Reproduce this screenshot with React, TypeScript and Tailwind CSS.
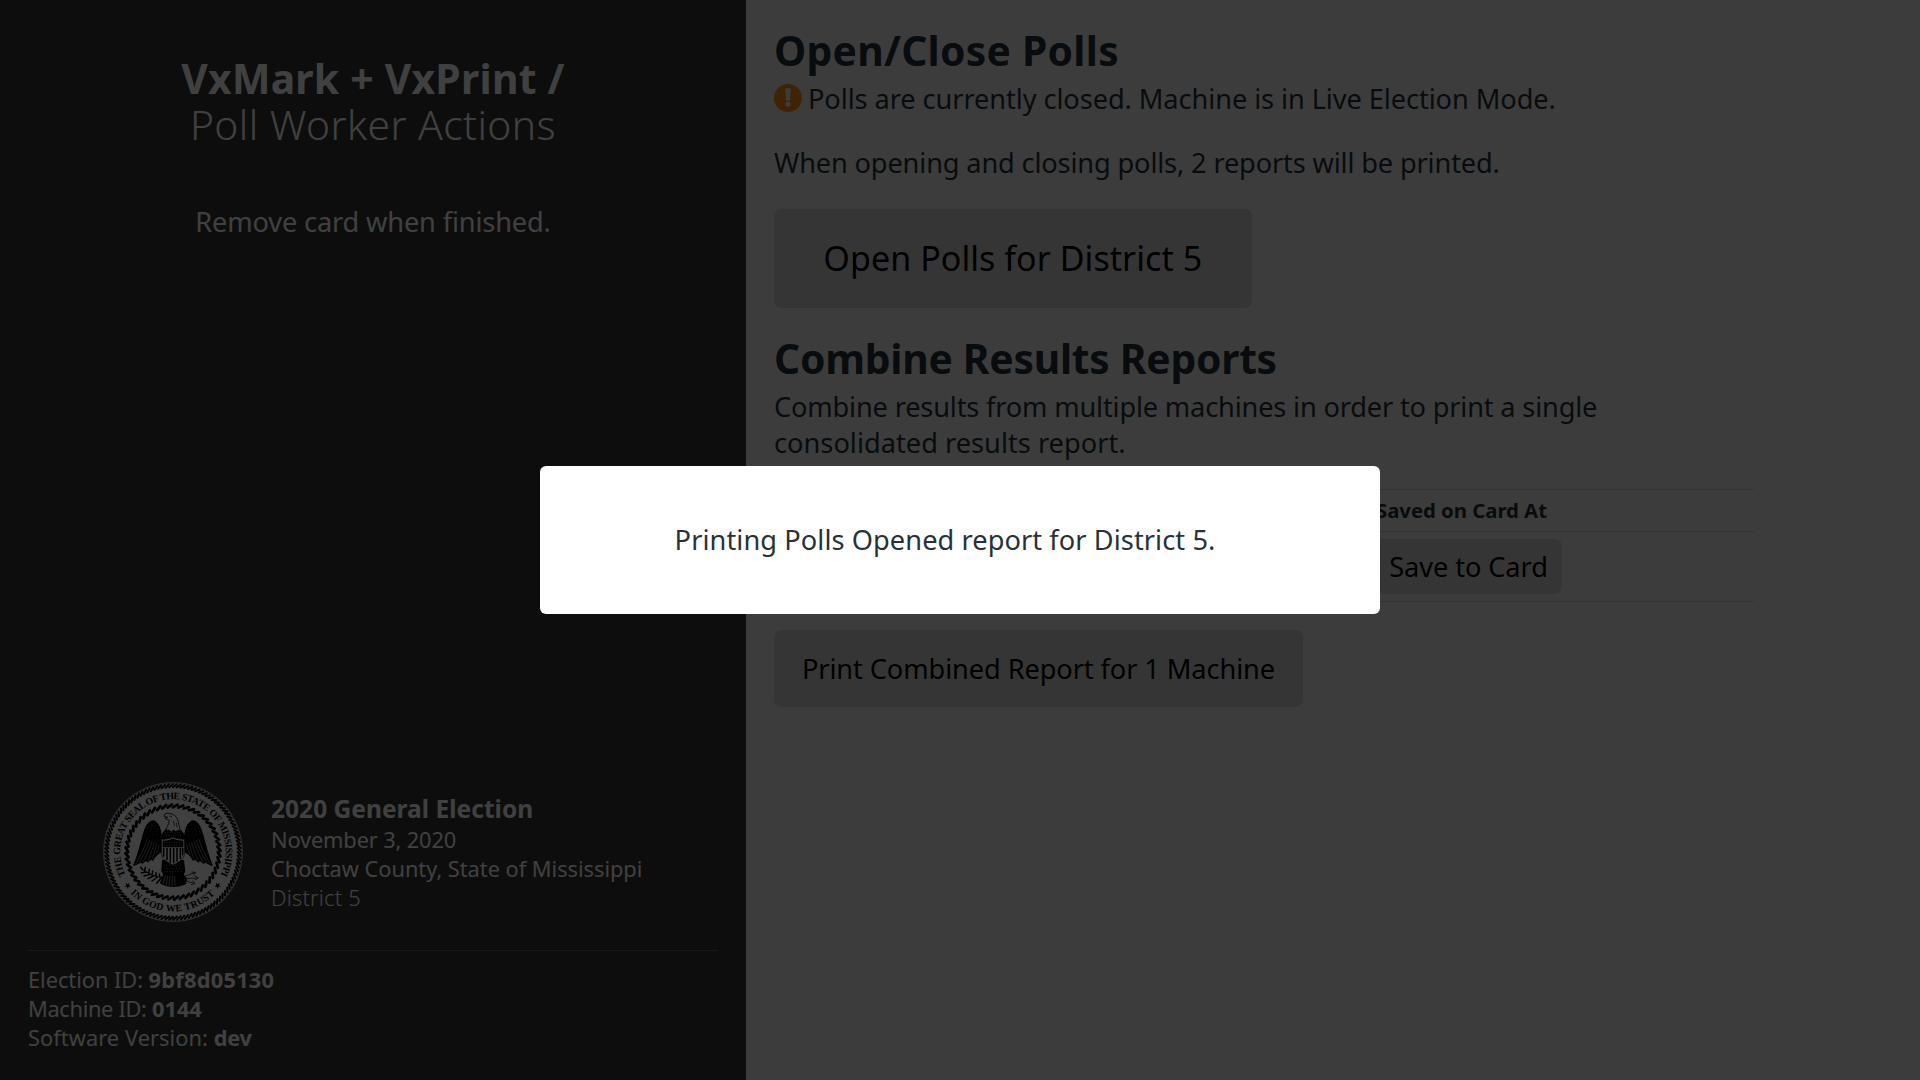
import React from "react";

const C = 70;

function polar(r: number, deg: number): string {
  const a = (deg * Math.PI) / 180;
  return `${(C + r * Math.cos(a)).toFixed(2)} ${(C + r * Math.sin(a)).toFixed(2)}`;
}

/** Slanted strands that make up a twisted rope ring. */
function Rope({ inner, outer, count, slant, width }: { inner: number; outer: number; count: number; slant: number; width: number }) {
  const step = 360 / count;
  const d = Array.from({ length: count }, (_, i) => {
    const a = i * step;
    return `M${polar(inner, a)}L${polar(outer, a + slant)}`;
  }).join("");
  return <path d={d} stroke="#000" strokeWidth={width} strokeLinecap="round" fill="none" />;
}

function Wing() {
  return (
    <g>
      <path
        d="M246 238C246 212 238 188 222 181C206 180 196 196 188 224C180 254 170 290 159 318C168 316 176 311 184 308L187 312L198 303L203 308L213 299L219 303C226 288 236 280 248 276Z"
        fill="#000"
      />
      <g stroke="#fff" strokeWidth="1.3" fill="none">
        <path d="M202 236C194 262 182 288 166 313" />
        <path d="M209 240C202 264 190 288 176 309" />
        <path d="M216 243C210 264 202 284 189 306" />
        <path d="M223 247C219 264 212 284 204 302" />
        <path d="M230 250C227 266 222 280 217 296" />
        <path d="M237 254C236 264 233 272 229 283" />
      </g>
      <g stroke="#fff" strokeWidth="1.3" strokeDasharray="2 6" fill="none">
        <path d="M206 198C202 208 198 218 196 230" />
        <path d="M217 192C212 206 208 218 206 232" />
        <path d="M226 196C222 210 219 222 217 236" />
        <path d="M234 206C231 218 229 230 228 242" />
      </g>
    </g>
  );
}

function Seal() {
  const star = "M0 -10L2.6 -3.2L9.6 -3.1L4 1.3L6 8.1L0 4.1L-6 8.1L-4 1.3L-9.6 -3.1L-2.6 -3.2Z";
  return (
    <svg viewBox="0 0 140 140" className="h-[140px] w-[140px] shrink-0">
      <defs>
        <path id="seal-top" d={`M${polar(52.8, 154)}A52.8 52.8 0 1 1 ${polar(52.8, 26)}`} />
        <path id="seal-bottom" d={`M${polar(59.4, 136)}A59.4 59.4 0 0 0 ${polar(59.4, 44)}`} />
      </defs>
      <circle cx="70" cy="70" r="69.8" fill="#fff" />
      <circle cx="70" cy="70" r="69" fill="none" stroke="#000" strokeWidth=".4" />
      <Rope inner={64.8} outer={67.8} count={108} slant={3.2} width={2.1} />
      <Rope inner={44.8} outer={47.6} count={52} slant={5.5} width={2.8} />
      <g fontFamily="'Liberation Serif', serif" fontWeight="700" fill="#000">
        <text fontSize="9.8">
          <textPath href="#seal-top" textLength="213" lengthAdjust="spacing">THE GREAT SEAL OF THE STATE OF MISSISSIPPI</textPath>
        </text>
        <text fontSize="9.8">
          <textPath href="#seal-bottom" textLength="94" lengthAdjust="spacing">IN GOD WE TRUST</textPath>
        </text>
      </g>
      <g transform="translate(-23 -22) scale(.33333)">
        <path d={star} transform="translate(143 377) rotate(-40)" />
        <path d={star} transform="translate(413 377) rotate(40)" />
        <Wing />
        <g transform="translate(558 0) scale(-1 1)">
          <Wing />
        </g>
        {/* tail and body */}
        <path d="M246 300H312L316 334L312 342L319 372C296 384 264 384 242 372L249 342L244 334Z" fill="#000" />
        <g stroke="#fff" strokeWidth="1.6">
          <path d="M256 346L250 372M263 347L259 376M270 348L267 378M277 348L276 379M284 348L285 378" />
        </g>
        <g stroke="#fff" strokeWidth="1.8" strokeDasharray="2.5 6">
          <path d="M250 316H310M254 325H308M252 335H310" />
        </g>
        {/* breast */}
        <path d="M256 208C248 218 242 226 242 240H316C316 226 310 216 300 208Z" fill="#000" />
        <path d="M251 226L308 226M256 218L302 218" stroke="#fff" strokeWidth="2" strokeDasharray="2 5" />
        {/* head and neck */}
        <path
          d="M253 170C251 163 256 159 265 160C276 160 287 166 293 178C297 190 298 202 301 214L293 210L288 216L281 210L274 216L267 210L257 212C260 200 268 192 268 181C262 178 256 178 255 174L264 172Z"
          fill="#fff"
          stroke="#000"
          strokeWidth="2.4"
        />
        <path d="M268 168L276 170M280 182L284 198M289 188L291 202" stroke="#000" strokeWidth="2" />
        {/* shield */}
        <path d="M244 238C256 238 266 236 279 232C292 236 302 238 314 238V280C312 296 298 308 279 315C260 308 246 296 244 280Z" fill="#fff" stroke="#000" strokeWidth="2" />
        <path d="M248 242C260 242 268 240 279 236C290 240 300 242 310 242V262H248Z" fill="#000" />
        <path d="M252 248H308M252 256H308" stroke="#fff" strokeWidth="2" strokeDasharray="2.4 5" />
        <path d="M251 264V290M261 264V301M271 264V308M281 264V310M291 264V305M301 264V297M308 264V286" stroke="#000" strokeWidth="4.6" />
        {/* olive branch */}
        <g stroke="#000" fill="none" strokeLinecap="round">
          <path d="M184 326C204 340 222 350 250 352" strokeWidth="2.2" />
          <path
            d="M188 329L182 322M194 333L196 322M200 337L184 338M206 340L208 328M210 343L192 348M216 346L218 333M221 348L204 356M228 350L228 338M233 351L216 363M240 352L238 342M244 353L230 370M248 354L242 368"
            strokeWidth="4.4"
          />
        </g>
        {/* arrows */}
        <g stroke="#000" fill="none" strokeWidth="2.2">
          <path d="M306 352L344 338M308 356L352 354M306 360L342 370" />
          <path d="M334 336L347 337L340 347M344 348L355 354L344 360M338 362L345 371L333 374" />
        </g>
        <path d="M300 346L318 350L322 362L306 368Z" fill="#000" />
      </g>
    </svg>
  );
}

function WarningIcon() {
  return (
    <svg viewBox="0 0 28 28" className="mt-[3px] h-7 w-7 shrink-0">
      <circle cx="14" cy="14" r="14" fill="#ff8c00" />
      <path d="M11.2 4.2H16.8L16 16.6H12Z" fill="#f0f0f0" />
      <circle cx="14" cy="20.1" r="2.6" fill="#f0f0f0" />
    </svg>
  );
}

function Sidebar() {
  return (
    <aside className="flex w-[746px] shrink-0 flex-col bg-[#343434] px-7 pt-[55px] pb-7 text-white">
      <header className="text-center">
        <h1 className="text-[40.8px] leading-[46px]">
          <span className="block font-bold tracking-[0.26px]">VxMark + VxPrint /</span>
          <span className="block font-light tracking-[0.42px]">Poll Worker Actions</span>
        </h1>
        <p className="mt-[57px] tracking-[-0.144px]">Remove card when finished.</p>
      </header>
      <div className="mt-auto flex items-center justify-center gap-7 pb-7">
        <Seal />
        <div className="w-[372px] text-[21.8px] leading-[29.1px] whitespace-nowrap">
          <h2 className="pt-px text-[24.5px] leading-[31.8px] font-bold tracking-[0.03px]">2020 General Election</h2>
          <p className="tracking-[-0.14px]">November 3, 2020</p>
          <p className="tracking-[-0.03px]">Choctaw County, State of Mississippi</p>
          <p className="font-light tracking-[0.2px]">District 5</p>
        </div>
      </div>
      <div className="border-t border-[#666666] pt-[14px] text-[21.8px] leading-[29px]">
        <p>
          <span className="tracking-[-0.04px]">Election ID: </span>
          <b className="tracking-[0.24px]">9bf8d05130</b>
        </p>
        <p>
          <span className="tracking-[-0.32px]">Machine ID: </span>
          <b>0144</b>
        </p>
        <p>
          <span className="tracking-[0.06px]">Software Version: </span>
          <b className="tracking-[-0.3px]">dev</b>
        </p>
      </div>
    </aside>
  );
}

function Main() {
  return (
    <main className="flex-1 bg-[#f0f0f0] px-7 pt-[27px] text-[#263238]">
      <section>
        <h2 className="text-[40.8px] leading-[46px] font-bold tracking-[0.26px]">Open/Close Polls</h2>
        <p className="mt-2 flex gap-[6px] tracking-[-0.078px]">
          <WarningIcon />
          Polls are currently closed. Machine is in Live Election Mode.
        </p>
        <p className="mt-7 tracking-[-0.147px]">When opening and closing polls, 2 reports will be printed.</p>
        <button className="mt-[27px] block h-[99px] w-[477.5px] rounded-[7px] bg-[#d3d3d3] text-[34px] tracking-[0.06px] text-black">Open Polls for District 5</button>
      </section>
      <section className="mt-[27px]">
        <h2 className="text-[40.8px] leading-[46px] font-bold tracking-[-0.26px]">Combine Results Reports</h2>
        <p className="mt-2 tracking-[-0.17px]">
          Combine results from multiple machines in order to print a single
          <br />
          <span className="tracking-[0.02px]">consolidated results report.</span>
        </p>
        <div className="mt-[27px] w-[980px] border-t border-[#cccccc]">
          <div className="h-[42px] border-b border-[#cccccc] pl-[602px] text-[20.4px] leading-[41px] font-bold tracking-[-0.06px]">Saved on Card At</div>
          <div className="flex h-[70px] items-center border-b border-[#cccccc] pl-[601px]">
            <button className="h-[55px] w-[187px] rounded-[7px] bg-[#d3d3d3] pt-[2px] tracking-[-0.084px] text-black">Save to Card</button>
          </div>
        </div>
        <button className="mt-7 block h-[77px] w-[529px] rounded-[7px] bg-[#d3d3d3] pt-[2px] tracking-[-0.09px] text-black">Print Combined Report for 1 Machine</button>
      </section>
    </main>
  );
}

export default function App() {
  return (
    <div className="relative flex h-[1080px] w-[1920px] overflow-hidden font-['Noto_Sans',sans-serif] text-[27.2px] leading-[36.4px]">
      <Sidebar />
      <Main />
      <div className="absolute inset-0 flex items-center justify-center bg-black/75">
        <div className="flex h-[148px] w-[840px] items-center justify-center rounded-[6px] bg-white pr-[30px] tracking-[0.08px] text-[#263238]">
          Printing Polls Opened report for District 5.
        </div>
      </div>
    </div>
  );
}
